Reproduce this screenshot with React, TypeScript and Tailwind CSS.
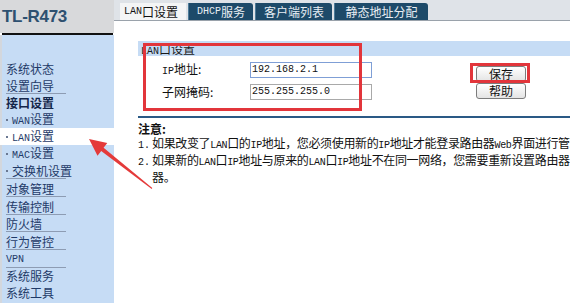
const cjk = "font-['Noto_Sans_CJK_SC',sans-serif]";

// Latin runs in a fixed 6px-per-char face, as the router's bitmap font does
const A = ({ children }: { children: string }) => (
    <span className="font-['Liberation_Mono',monospace] text-[10px]">{children}</span>
);

type NavItem = {
    label: React.ReactNode;
    key: string;
    h: number;
    bold?: boolean;
    sub?: boolean;
    active?: boolean;
    sep?: boolean;
};

const navItems: NavItem[] = [
    { key: 'status', label: '系统状态', h: 17 },
    { key: 'wizard', label: '设置向导', h: 17, sep: true },
    { key: 'iface', label: '接口设置', h: 17, bold: true },
    { key: 'wan', label: <><A>WAN</A>设置</>, h: 17, sub: true },
    { key: 'lan', label: <><A>LAN</A>设置</>, h: 17, sub: true, active: true },
    { key: 'mac', label: <><A>MAC</A>设置</>, h: 17, sub: true },
    { key: 'switch', label: '交换机设置', h: 18, sub: true, sep: true },
    { key: 'obj', label: '对象管理', h: 18, sep: true },
    { key: 'flow', label: '传输控制', h: 17, sep: true },
    { key: 'fw', label: '防火墙', h: 18, sep: true },
    { key: 'behav', label: '行为管控', h: 17, sep: true },
    { key: 'vpn', label: <A>VPN</A>, h: 17, sep: true },
    { key: 'svc', label: '系统服务', h: 17 },
    { key: 'tools', label: '系统工具', h: 17 },
];

const SideItem = ({ item }: { item: NavItem }) => {
    return (
        <div
            className={`flex flex-col justify-center ${item.active ? 'bg-white -ml-[2px] pl-[6px]' : 'pl-[4px]'}`}
            style={{ height: item.h }}
        >
            <div
                className={`leading-[15px] text-[12px] whitespace-nowrap ${item.bold ? 'font-bold text-[#14264a]' : 'text-[#1f3a68]'} ${item.sep ? 'w-[60px] border-b border-[#8d9cb3]' : ''}`}
            >
                {item.sub ? (
                    <span className="flex items-center">
                        <span className="w-[2px] h-[2px] bg-[#6a7892] mr-[4px] shrink-0"></span>
                        <span>{item.label}</span>
                    </span>
                ) : (
                    <span>{item.label}</span>
                )}
            </div>
        </div>
    );
};

const Tab = ({ label, w, active }: { label: React.ReactNode; w: number; active?: boolean }) => {
    if (active) {
        return (
            <div
                className="h-[17px] bg-[#f4f5f6] flex items-center pl-[4px] text-[12px] leading-[17px] text-[#111]"
                style={{ width: w }}
            >
                {label}
            </div>
        );
    }
    return (
        <div
            className="h-[17px] bg-[#1d4a69] border-l border-[#4d7b99] rounded-tr-[3px] flex items-center justify-center text-[12px] leading-[17px] text-[#e8eef4]"
            style={{ width: w }}
        >
            {label}
        </div>
    );
};

export default function App() {
    return (
        <div className={`relative w-[570px] h-[303px] overflow-hidden bg-white flex ${cjk}`}>
            {/* Sidebar */}
            <aside className="w-[114px] shrink-0 flex flex-col">
                <div className="h-[33px] bg-[#d8d9db] pl-[2px] pt-[7px] text-[17px] font-bold leading-[19px] tracking-[-0.3px] text-[#2e5070] font-['Liberation_Sans',sans-serif]">
                    TL-R473
                </div>
                <div className="h-[2px] bg-[#111] ml-[2px] w-[111px]"></div>
                <div className="flex-1 bg-[#c6dcf5] border-l-2 border-[#d3d7dd] pt-[25px]">
                    {navItems.map((item) => (
                        <SideItem key={item.key} item={item} />
                    ))}
                </div>
            </aside>

            {/* Content */}
            <main className="flex-1 flex flex-col min-w-0">
                <div className="h-[21px] shrink-0 bg-[#dfe3e8] border-b border-[#9aa2ab] flex items-end pl-[6px] gap-[2px]">
                    <Tab label={<><A>LAN</A>口设置</>} w={66} active />
                    <Tab label={<><A>DHCP</A>服务</>} w={65} />
                    <Tab label="客户端列表" w={77} />
                    <Tab label="静态地址分配" w={94} />
                </div>

                <div className="pl-[24px] pt-[20px] w-[560px]">
                    {/* Section header */}
                    <div className="h-[15px] bg-[#c6dcf5] pl-[3px] text-[12px] leading-[15px] text-[#1a1a1a]">
                        <A>LAN</A>口设置
                    </div>

                    {/* Form */}
                    <div className="flex pt-[6px] pb-[16px]">
                        <div className="flex flex-col gap-[6px] pl-[24px]">
                            <div className="flex items-center h-[16px]">
                                <span className="w-[88px] text-[12px] leading-[16px] text-[#111]"><A>IP</A>地址:</span>
                                <div className="w-[122px] h-[16px] border border-[#7f9fd6] bg-white pl-[1px] text-[10px] leading-[14px] text-[#111] font-['Liberation_Mono',monospace]">
                                    192.168.2.1
                                </div>
                            </div>
                            <div className="flex items-center h-[16px]">
                                <span className="w-[88px] text-[12px] leading-[16px] text-[#111]">子网掩码:</span>
                                <div className="w-[122px] h-[16px] border border-[#a9a9a9] bg-white pl-[1px] text-[10px] leading-[14px] text-[#111] font-['Liberation_Mono',monospace]">
                                    255.255.255.0
                                </div>
                            </div>
                        </div>
                        <div className="flex flex-col gap-[1px] ml-[104px] pt-[4px]">
                            <button className="w-[50px] h-[16px] border border-[#7c7c7c] rounded-[3px] bg-gradient-to-b from-white to-[#e4e4e4] text-[12px] leading-[14px] text-[#111]">
                                保存
                            </button>
                            <button className="w-[50px] h-[16px] border border-[#7c7c7c] rounded-[3px] bg-gradient-to-b from-white to-[#e4e4e4] text-[12px] leading-[14px] text-[#111]">
                                帮助
                            </button>
                        </div>
                    </div>

                    <div className="h-[2px] bg-[#2a5985]"></div>

                    {/* Notes */}
                    <div className="pt-[4px] text-[12px] leading-[14px] text-[#111]">
                        <div className="font-bold">注意:</div>
                        <div className="flex whitespace-nowrap">
                            <span className="w-[14px] shrink-0"><A>1.</A></span>
                            <span className="tracking-[-0.35px]">如果改变了<A>LAN</A>口的<A>IP</A>地址，您必须使用新的<A>IP</A>地址才能登录路由器<A>Web</A>界面进行管理。</span>
                        </div>
                        <div className="flex whitespace-nowrap">
                            <span className="w-[14px] shrink-0"><A>2.</A></span>
                            <span className="tracking-[-0.35px]">
                                如果新的<A>LAN</A>口<A>IP</A>地址与原来的<A>LAN</A>口<A>IP</A>地址不在同一网络，您需要重新设置路由器的<A>IP</A>地址才能登录路由
                                <br />
                                器。
                            </span>
                        </div>
                    </div>
                </div>
            </main>

            {/* Annotations */}
            <div className="absolute left-[143px] top-[43px] w-[219px] h-[68px] border-[3px] border-[#e2353b]"></div>
            <div className="absolute left-[470px] top-[63px] w-[60px] h-[20px] border-[3px] border-[#e2353b]"></div>
            <svg className="absolute inset-0 pointer-events-none" width="570" height="303" viewBox="0 0 570 303">
                <polygon
                    points="89,139 107.3,143.1 103.6,147.8 152.3,188.1 151.7,188.9 101.2,151 97.5,155.7"
                    fill="#e43a3a"
                />
            </svg>
        </div>
    );
}
